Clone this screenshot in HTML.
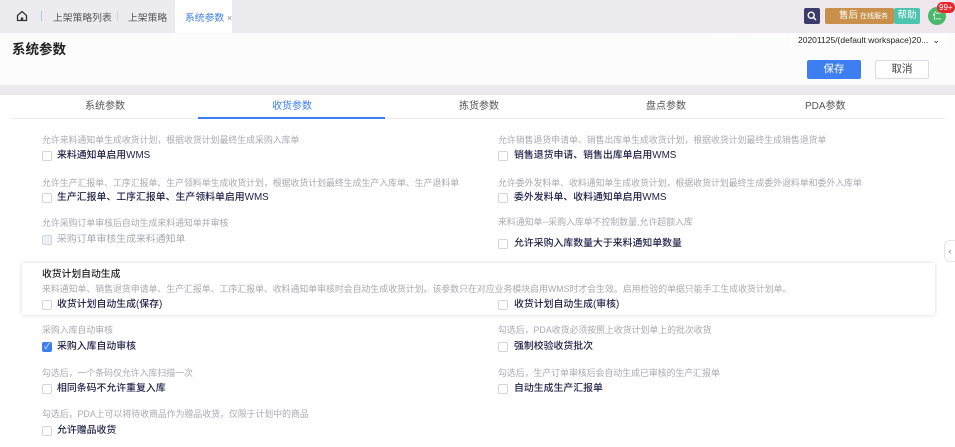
<!DOCTYPE html>
<html><head><meta charset="utf-8"><style>
*{margin:0;padding:0;box-sizing:border-box}
body{width:955px;height:447px;overflow:hidden;background:#fff;font-family:"Liberation Sans","Noto Sans CJK SC",sans-serif;position:relative}
.a{position:absolute;white-space:nowrap}
.d{font-size:8.9px;color:#a9a9b2;line-height:12px}
.l{font-size:9.9px;color:#22224a;line-height:14px;font-weight:500}
.cb{position:absolute;width:10px;height:10px;border:1px solid #d4d4dc;border-radius:2px;background:#fff}
</style></head><body>
<div class="a" style="left:0;top:0;width:955px;height:33px;background:linear-gradient(90deg,#ececf0 0%,#ececf0 60%,#efe6ee 100%)"></div>
<svg class="a" style="left:16px;top:10px" width="12" height="12" viewBox="0 0 12 12"><path d="M1.5 5.5L6 1.5l4.5 4v5h-9z" fill="none" stroke="#333" stroke-width="1.3"/><rect x="4.8" y="7.5" width="2.4" height="3" fill="#333"/></svg>
<div class="a" style="left:41px;top:11px;width:1px;height:10px;background:#b8c6e8"></div>
<div class="a" style="left:53px;top:10px;font-size:9.8px;color:#555">上架策略列表</div>
<div class="a" style="left:117px;top:11px;width:1px;height:10px;background:#d0d0d8"></div>
<div class="a" style="left:128px;top:10px;font-size:9.8px;color:#555">上架策略</div>
<div class="a" style="left:175px;top:0;width:57px;height:33px;background:#fff"></div>
<div class="a" style="left:185px;top:10px;font-size:9.8px;color:#3d7ef0">系统参数 <span style="color:#888;font-size:9px">×</span></div>
<div class="a" style="left:804px;top:8px;width:16px;height:16px;background:#3c3b6b;border-radius:2px"></div>
<svg class="a" style="left:807px;top:11px" width="10" height="10" viewBox="0 0 10 10"><circle cx="4.2" cy="4.2" r="3" fill="none" stroke="#fff" stroke-width="1.4"/><path d="M6.5 6.5L9 9" stroke="#fff" stroke-width="1.5"/></svg>
<div class="a" style="left:825px;top:8px;width:69px;height:16px;background:#c9904c;border-radius:2px;color:#fff;font-size:9.5px;line-height:16px;padding-left:14px">售后<span style="font-size:7px"> 在线服务</span></div>
<div class="a" style="left:894px;top:8px;width:26px;height:16px;background:#4cc4ae;border-radius:2px;color:#fff;font-size:9.5px;line-height:16px;text-align:center">帮助</div>
<div class="a" style="left:928px;top:7px;width:18px;height:18px;background:#4ab86a;border-radius:50%;color:#fff;font-size:9px;line-height:18px;text-align:center">仁</div>
<div class="a" style="left:937px;top:2px;height:11px;padding:0 2px;background:#e8262c;border-radius:6px;color:#fff;font-size:8px;line-height:11px">99+</div>
<div class="a" style="left:0;top:33px;width:955px;height:52px;background:#fcfcfd"></div>
<div class="a" style="left:12px;top:38px;font-size:13.5px;font-weight:bold;color:#222">系统参数</div>
<div class="a" style="left:790px;top:33px;width:155px;height:15px;background:#fff;font-size:8.5px;color:#222;line-height:15px;padding-left:8px">20201125/(default workspace)20... <span style="position:absolute;right:5px;font-size:9px">⌄</span></div>
<div class="a" style="left:807px;top:60px;width:54px;height:19px;background:#3d7ef0;border-radius:2px;color:#fff;font-size:10.5px;line-height:19px;text-align:center">保存</div>
<div class="a" style="left:875px;top:60px;width:54px;height:19px;background:#fff;border:1px solid #dcdce2;border-radius:2px;color:#444;font-size:10.5px;line-height:17px;text-align:center">取消</div>
<div class="a" style="left:0;top:85px;width:955px;height:10px;background:#ebe9ee"></div>
<div class="a" style="left:10px;top:118px;width:935px;height:1px;background:#ececf2"></div>
<div class="a" style="left:198px;top:117px;width:187px;height:2px;background:#3d7ef0"></div>
<div class="a" style="left:0;top:100px;width:955px;font-size:10px;color:#555;line-height:14px">
<span class="a" style="left:85px">系统参数</span><span class="a" style="left:272px;color:#3d7ef0">收货参数</span><span class="a" style="left:459px">拣货参数</span><span class="a" style="left:646px">盘点参数</span><span class="a" style="left:805px">PDA参数</span></div>
<div class="a" style="left:944px;top:240px;width:11px;height:22px;background:#fff;border:1px solid #e4e4ea;border-right:none;border-radius:6px 0 0 6px;font-size:9px;color:#777;line-height:20px;text-align:center">‹</div>
<div class="a" style="left:22px;top:263px;width:913px;height:52px;background:#fff;box-shadow:0 0 4px rgba(0,0,0,.15);border-radius:2px"></div>

<div class="a d" style="left:42px;top:134px">允许来料通知单生成收货计划，根据收货计划最终生成采购入库单</div>
<div class="cb" style="left:42px;top:151px"></div><div class="a l" style="left:57px;top:149px">来料通知单启用WMS</div>
<div class="a d" style="left:42px;top:177px">允许生产汇报单、工序汇报单、生产领料单生成收货计划，根据收货计划最终生成生产入库单、生产退料单</div>
<div class="cb" style="left:42px;top:193px"></div><div class="a l" style="left:57px;top:191px">生产汇报单、工序汇报单、生产领料单启用WMS</div>
<div class="a d" style="left:42px;top:217px">允许采购订单审核后自动生成来料通知单并审核</div>
<div class="cb" style="left:42px;top:235px;background:#eef0f7"></div><div class="a l" style="left:57px;top:233px;color:#a9a9b8;font-weight:400">采购订单审核生成来料通知单</div>

<div class="a d" style="left:498px;top:134px">允许销售退货申请单、销售出库单生成收货计划，根据收货计划最终生成销售退货单</div>
<div class="cb" style="left:498px;top:151px"></div><div class="a l" style="left:514px;top:149px">销售退货申请、销售出库单启用WMS</div>
<div class="a d" style="left:498px;top:177px">允许委外发料单、收料通知单生成收货计划，根据收货计划最终生成委外退料单和委外入库单</div>
<div class="cb" style="left:498px;top:193px"></div><div class="a l" style="left:514px;top:191px">委外发料单、收料通知单启用WMS</div>
<div class="a d" style="left:498px;top:216px">来料通知单--采购入库单不控制数量,允许超额入库</div>
<div class="cb" style="left:498px;top:239px"></div><div class="a l" style="left:514px;top:237px">允许采购入库数量大于来料通知单数量</div>

<div class="a l" style="left:42px;top:268px;font-size:9.8px;color:#222">收货计划自动生成</div>
<div class="a d" style="left:42px;top:283px">来料通知单、销售退货申请单、生产汇报单、工序汇报单、收料通知单审核时会自动生成收货计划。该参数只在对应业务模块启用WMS时才会生效。启用检验的单据只能手工生成收货计划单。</div>
<div class="cb" style="left:42px;top:300px"></div><div class="a l" style="left:57px;top:298px">收货计划自动生成(保存)</div>
<div class="cb" style="left:498px;top:300px"></div><div class="a l" style="left:514px;top:298px">收货计划自动生成(审核)</div>

<div class="a d" style="left:42px;top:324px">采购入库自动审核</div>
<div class="cb" style="left:42px;top:342px;background:#3d7ef0;border-color:#3d7ef0;color:#fff;font-size:8px;line-height:8px;text-align:center">✓</div><div class="a l" style="left:57px;top:340px">采购入库自动审核</div>
<div class="a d" style="left:42px;top:367px">勾选后，一个条码仅允许入库扫描一次</div>
<div class="cb" style="left:42px;top:384px"></div><div class="a l" style="left:57px;top:382px">相同条码不允许重复入库</div>
<div class="a d" style="left:42px;top:408px">勾选后，PDA上可以将待收商品作为赠品收货，仅限于计划中的商品</div>
<div class="cb" style="left:42px;top:426px"></div><div class="a l" style="left:57px;top:424px">允许赠品收货</div>

<div class="a d" style="left:498px;top:324px">勾选后，PDA收货必须按照上收货计划单上的批次收货</div>
<div class="cb" style="left:498px;top:342px"></div><div class="a l" style="left:514px;top:340px">强制校验收货批次</div>
<div class="a d" style="left:498px;top:367px">勾选后，生产订单审核后会自动生成已审核的生产汇报单</div>
<div class="cb" style="left:498px;top:384px"></div><div class="a l" style="left:514px;top:382px">自动生成生产汇报单</div>
</body></html>
